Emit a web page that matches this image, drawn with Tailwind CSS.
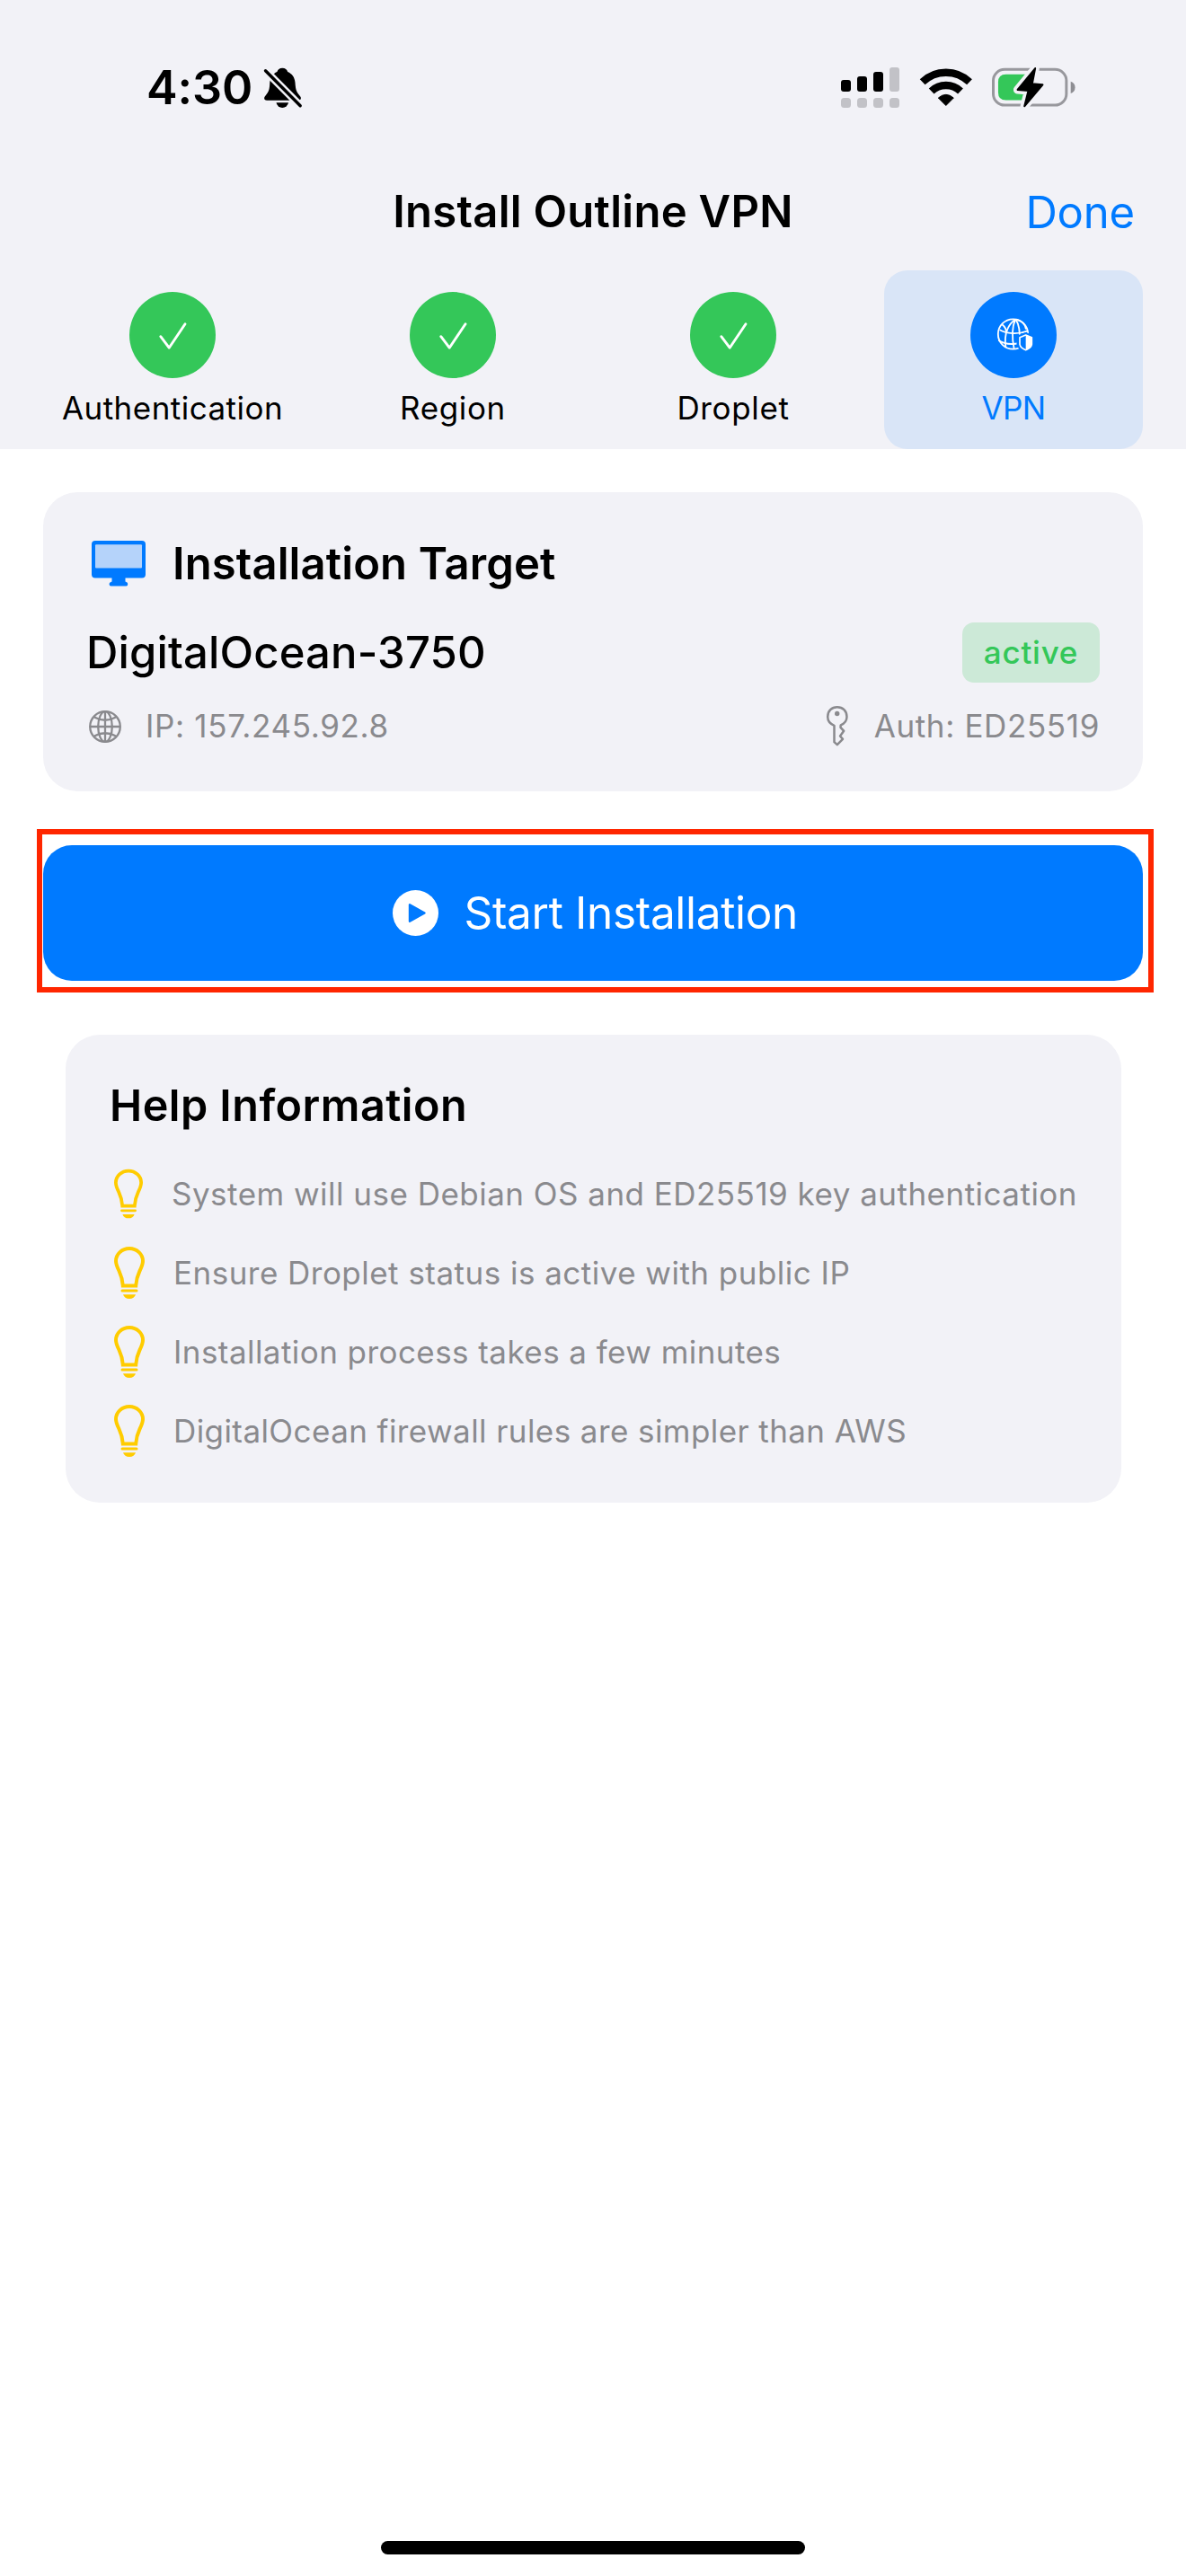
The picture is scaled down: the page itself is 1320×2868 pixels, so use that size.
<!DOCTYPE html>
<html lang="en">
<head>
<meta charset="utf-8">
<title>Install Outline VPN</title>
<script src="https://cdn.jsdelivr.net/npm/@tailwindcss/browser@4"></script>
</head>
<body class="bg-white">
<div class="flex h-[2868px] w-[1320px] flex-col overflow-hidden bg-white font-['Inter',sans-serif] text-black">

  <header class="h-[500px] bg-[#f2f2f7]">
    <!-- Status bar -->
    <div class="flex h-[196px] items-center pr-[122px] pl-[163px]">
      <div class="w-[131px] text-[52px] leading-none font-semibold tracking-[-0.1px]">4:30</div>
      <svg class="h-[46px] w-[42px] overflow-visible" viewBox="0 0 42 46">
        <path d="M20.3 .8C23.5 .8 25.5 2.6 26.2 5 31 7 34 11 34.5 17 35 24 35.5 27 39.5 31.5 42 34 41 36.7 38 36.7H3C0 36.7-.8 34 1.5 31.5 5.5 27 6 24 6.3 17 6.8 11 9.5 7 14.4 5 15.1 2.6 17.1.8 20.3.8Z"/>
        <path d="M13.5 39.3H27a6.8 6.4 0 0 1-13.5 0Z"/>
        <path d="M-1 1.2 42.5 45" stroke="#f2f2f7" stroke-width="8.4"/>
        <path d="M1.5 3.7 40.2 42.7" stroke="#000" stroke-width="3.4" stroke-linecap="round"/>
      </svg>
      <div class="mt-[-3px] ml-auto flex items-center">
        <svg class="h-[46px] w-[65px]" viewBox="0 0 65 46">
          <g fill="#000"><rect y="15" width="11" height="13" rx="3"/><rect x="18" y="11" width="11" height="17" rx="3"/><rect x="36" y="6" width="11" height="22" rx="3"/></g>
          <g fill="#c2c2c7"><rect x="54" y="1" width="11" height="27" rx="3"/><rect y="35" width="11" height="11" rx="3.5"/><rect x="18" y="35" width="11" height="11" rx="3.5"/><rect x="36" y="35" width="11" height="11" rx="3.5"/><rect x="54" y="35" width="11" height="11" rx="3.5"/></g>
        </svg>
        <svg class="ml-[22.5px] h-[44px] w-[58px] overflow-visible" viewBox="374 72 174 132">
          <g fill="none" stroke="#000" stroke-width="25"><path d="M382 121A113 113 0 0 1 539 121"/><path d="M412 151.5A70 70 0 0 1 509 151.5"/></g>
          <path d="M435 174Q460.500 152 486 174L460.500 199.500Z" stroke="#000" stroke-width="3" stroke-linejoin="round"/>
        </svg>
        <svg class="ml-[21.500px] h-[46px] w-[95px] overflow-visible" viewBox="612 70 286 138">
          <rect x="619.500" y="79.500" width="245" height="120" rx="38" fill="none" stroke="#98989d" stroke-width="9"/>
          <path d="M879 120A21 21 0 0 1 879 160Z" fill="#8e8e93"/>
          <path d="M662 96H730V183H662Q636 183 636 157V122Q636 96 662 96Z" fill="#34c759"/>
          <path d="M760 76 701 148 737 151 724 203 785 131 750 128Z" fill="#f2f2f7" stroke="#f2f2f7" stroke-width="28" stroke-linejoin="round"/>
          <path d="M760 76 701 148 737 151 724 203 785 131 750 128Z" stroke="#000" stroke-width="6" stroke-linejoin="round"/>
        </svg>
      </div>
    </div>

    <!-- Navigation bar -->
    <div class="grid h-[78px] grid-cols-[1fr_auto_1fr] items-center leading-none">
      <span></span>
      <h1 class="text-[49px] leading-none font-semibold tracking-[0.26px]">Install Outline VPN</h1>
      <a class="justify-self-end pt-[2px] pr-[57px] text-[49px] tracking-[-0.16px] text-[#007aff]">Done</a>
    </div>

    <!-- Steps -->
    <nav class="mt-[27px] grid grid-cols-4 gap-6 px-12 text-[35px] leading-[44px] whitespace-nowrap">
      <div class="flex h-[199px] flex-col items-center pt-6">
        <svg class="size-24" viewBox="0 0 96 96"><circle cx="48" cy="48" r="48" fill="#34c759"/><path d="M34.8 49.700 44.2 62.200 62 35.800" fill="none" stroke="#fff" stroke-width="2.900" stroke-linecap="round" stroke-linejoin="round"/></svg>
        <span class="mt-[11px] tracking-[0.47px]">Authentication</span>
      </div>
      <div class="flex h-[199px] flex-col items-center pt-6">
        <svg class="size-24" viewBox="0 0 96 96"><circle cx="48" cy="48" r="48" fill="#34c759"/><path d="M34.8 49.700 44.2 62.200 62 35.800" fill="none" stroke="#fff" stroke-width="2.900" stroke-linecap="round" stroke-linejoin="round"/></svg>
        <span class="mt-[11px] tracking-[0.63px]">Region</span>
      </div>
      <div class="flex h-[199px] flex-col items-center pt-6">
        <svg class="size-24" viewBox="0 0 96 96"><circle cx="48" cy="48" r="48" fill="#34c759"/><path d="M34.8 49.700 44.2 62.200 62 35.800" fill="none" stroke="#fff" stroke-width="2.900" stroke-linecap="round" stroke-linejoin="round"/></svg>
        <span class="mt-[11px] tracking-[0.64px]">Droplet</span>
      </div>
      <div class="flex h-[199px] flex-col items-center rounded-[26px] bg-[#d9e5f7] pt-6">
        <svg class="size-24" viewBox="30 15 288 288">
          <circle cx="174" cy="159" r="144" fill="#007aff"/>
          <g fill="none" stroke="#fff" stroke-width="5.500">
            <circle cx="172.500" cy="156" r="50"/>
            <path d="M180 107C160 120 141 150 148 199M180 107C170 130 169 170 176 206M182 107C193 125 197 145 194 180M184 107C203 112 214 125 216 140"/>
            <path d="M136 124C147 133 150 140 150 150M128 142C150 155 190 158 222 145M124 176C140 188 165 192 195 186"/>
          </g>
          <path d="M215 157 238 166V190Q236 204 215 212 194 204 191 190V166Z" fill="#007aff" stroke="#007aff" stroke-width="13" stroke-linejoin="round"/>
          <path d="M215 159 235 167V190Q233 202 215 209 197 202 195 190V167Z" fill="#007aff" stroke="#fff" stroke-width="5" stroke-linejoin="round"/>
          <path d="M215 159 236 167V190Q234 203 215 210Z" fill="#fff"/>
        </svg>
        <span class="mt-[11px] tracking-[-0.7px] text-[#007aff]">VPN</span>
      </div>
    </nav>
  </header>

  <main class="flex flex-col">
    <!-- Installation target -->
    <section class="mx-12 mt-12 h-[333px] rounded-[38px] bg-[#f2f2f7] px-12 pt-[49px]">
      <div class="flex h-[60px] items-center pl-[6px]">
        <svg class="h-[51px] w-[60px]" viewBox="0 0 60 51">
          <path d="M4 0H56Q60 0 60 4V37.500Q60 41.500 56 41.500H37.500V45.500L39.500 46.500Q40.200 47 40.200 48.500 40.200 50.500 38.500 50.500H21.500Q19.600 50.500 19.600 48.500 19.600 47 20.500 46.500L22.500 45.500V41.500H4Q0 41.500 0 37.500V4Q0 0 4 0Z" fill="#007aff"/>
          <rect x="4" y="4.300" width="52" height="26.200" rx="1" fill="#b5d3fa"/>
        </svg>
        <h2 class="ml-[30px] text-[49px] leading-none font-semibold tracking-[0.11px]">Installation Target</h2>
      </div>
      <div class="mt-9 flex h-[67px] items-center justify-between">
        <span class="text-[49px] leading-none font-medium tracking-[0.15px]">DigitalOcean-3750</span>
        <span class="flex h-[67px] w-[153px] items-center justify-center rounded-[13px] bg-[#cce9d7] text-[35px] leading-none font-medium tracking-[0.75px] text-[#34c759]">active</span>
      </div>
      <div class="mt-[26px] flex h-[45px] items-center text-[35px] leading-none text-[#8a8a8e]">
        <svg class="ml-[3px] size-9" viewBox="0 0 36 36" fill="none" stroke="currentColor" stroke-width="2.300">
          <circle cx="18" cy="18" r="16.800"/><ellipse cx="18" cy="18" rx="7.800" ry="16.800"/>
          <path d="M18 1V35M1 18H35M6 7.500Q18 14 30 7.500M6 28.500Q18 22 30 28.500"/>
        </svg>
        <span class="ml-[27px] tracking-[0.66px]">IP: 157.245.92.8</span>
        <svg class="ml-auto h-[45px] w-6 overflow-visible" viewBox="0 0 24 45">
          <path d="M8.500 21.800C4 20 1.200 16.500 1.200 12 1.200 5.500 5.700 1.200 11.800 1.200S22.500 5.500 22.500 12C22.500 16 20 19.500 15.700 21.300L15.500 23.800 19.200 27.800 15 33.500 18 36.800 11.800 43.200 8.500 40.200Z" fill="none" stroke="currentColor" stroke-width="2.500" stroke-linejoin="round"/>
          <circle cx="11.700" cy="8.500" r="2.700" fill="currentColor"/>
        </svg>
        <span class="ml-[29px] tracking-[0.64px]">Auth: ED25519</span>
      </div>
    </section>

    <!-- Primary action -->
    <div class="relative mx-12 mt-[60px]">
      <button class="flex h-[151px] w-full items-center justify-center rounded-[32px] bg-[#007aff] pl-[5px] text-[49.5px] leading-none tracking-[-0.33px] text-white">
        <svg class="mr-[28.5px] size-[51px]" viewBox="0 0 51 51"><circle cx="25.500" cy="25.500" r="25.500" fill="#fff"/><path d="M19 16.300V34.700L35.500 25.500Z" fill="#007aff" stroke="#007aff" stroke-width="2.400" stroke-linejoin="round"/></svg>
        Start Installation
      </button>
      <div class="absolute -top-[18px] -right-[12px] -bottom-[13px] -left-[7px] border-[6px] border-[#ff2600]"></div>
    </div>

    <!-- Help -->
    <section class="mt-[60px] mr-[72px] ml-[73px] h-[521px] rounded-[38px] bg-[#f2f2f7] px-[49px] pt-[49px]">
      <h2 class="h-[60px] text-[48.5px] leading-[60px] font-semibold tracking-[0.47px]">Help Information</h2>
      <ul class="mt-6 text-[35px] leading-none whitespace-nowrap text-[#8a8a8e]">
        <li class="flex h-[88px] items-center pl-[5px]">
          <svg class="mr-[32px] h-[58px] w-[34px]" viewBox="0 0 34 58"><path d="M9.800 43.400C9.400 37 8.600 33.500 5.500 27 3 22 2 19.500 2 16A15 14 0 0 1 32 16C32 19.500 31 22 28.500 27 25.400 33.500 24.600 37 24.200 43.400Z" fill="none" stroke="#fc0" stroke-width="4"/><path d="M9 49H25" stroke="#fc0" stroke-width="3" stroke-linecap="round"/><path d="M10 53.300H24Q22.500 58 17 58T10 53.300Z" fill="#fc0"/></svg>
          <span class="tracking-[0.48px]">System will use Debian OS and ED25519 key authentication</span>
        </li>
        <li class="flex h-[88px] items-center pl-[5px]">
          <svg class="mr-[32px] h-[58px] w-[34px]" viewBox="0 0 34 58"><path d="M9.800 43.400C9.400 37 8.600 33.500 5.500 27 3 22 2 19.500 2 16A15 14 0 0 1 32 16C32 19.500 31 22 28.500 27 25.400 33.500 24.600 37 24.200 43.400Z" fill="none" stroke="#fc0" stroke-width="4"/><path d="M9 49H25" stroke="#fc0" stroke-width="3" stroke-linecap="round"/><path d="M10 53.300H24Q22.500 58 17 58T10 53.300Z" fill="#fc0"/></svg>
          <span class="tracking-[0.48px]">Ensure Droplet status is active with public IP</span>
        </li>
        <li class="flex h-[88px] items-center pl-[5px]">
          <svg class="mr-[32px] h-[58px] w-[34px]" viewBox="0 0 34 58"><path d="M9.800 43.400C9.400 37 8.600 33.500 5.500 27 3 22 2 19.500 2 16A15 14 0 0 1 32 16C32 19.500 31 22 28.500 27 25.400 33.500 24.600 37 24.200 43.400Z" fill="none" stroke="#fc0" stroke-width="4"/><path d="M9 49H25" stroke="#fc0" stroke-width="3" stroke-linecap="round"/><path d="M10 53.300H24Q22.500 58 17 58T10 53.300Z" fill="#fc0"/></svg>
          <span class="tracking-[0.44px]">Installation process takes a few minutes</span>
        </li>
        <li class="flex h-[88px] items-center pl-[5px]">
          <svg class="mr-[32px] h-[58px] w-[34px]" viewBox="0 0 34 58"><path d="M9.800 43.400C9.400 37 8.600 33.500 5.500 27 3 22 2 19.500 2 16A15 14 0 0 1 32 16C32 19.500 31 22 28.500 27 25.400 33.500 24.600 37 24.200 43.400Z" fill="none" stroke="#fc0" stroke-width="4"/><path d="M9 49H25" stroke="#fc0" stroke-width="3" stroke-linecap="round"/><path d="M10 53.300H24Q22.500 58 17 58T10 53.300Z" fill="#fc0"/></svg>
          <span class="tracking-[0.42px]">DigitalOcean firewall rules are simpler than AWS</span>
        </li>
      </ul>
    </section>
  </main>

  <!-- Home indicator -->
  <div class="mx-auto mt-auto mb-[24px] h-[15px] w-[472px] rounded-full bg-black"></div>
</div>
</body>
</html>
